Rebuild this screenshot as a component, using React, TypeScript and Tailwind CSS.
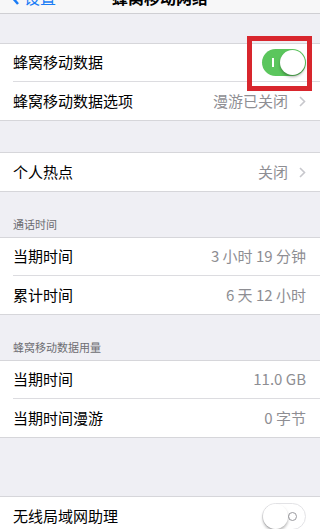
import React from 'react';

const font = { fontFamily: '"Noto Sans CJK SC", "Noto Sans", sans-serif' };

function Chevron() {
  return (
    <svg width="7" height="11" viewBox="0 0 7 11" className="ml-[11px]" aria-hidden>
      <path d="M1 1l4.5 4.5L1 10" fill="none" stroke="#c7c7cc" strokeWidth="1.6" />
    </svg>
  );
}

function Toggle({ on }: { on: boolean }) {
  if (on) {
    return (
      <div className="relative h-[27px] w-[44px] rounded-full bg-[#5bc65d]">
        <div className="absolute left-[10px] top-[9px] h-[9px] w-[1.5px] bg-white" />
        <div className="absolute right-[1px] top-[1px] h-[25px] w-[25px] rounded-full bg-white shadow-[0_2px_3px_rgba(0,0,0,0.3)]" />
      </div>
    );
  }
  return (
    <div className="relative h-[27px] w-[44px] rounded-full border border-[#e3e3e6] bg-white">
      <div className="absolute right-[8px] top-[8px] h-[9px] w-[9px] rounded-full border border-[#9a9a9f]" />
      <div className="absolute left-0 top-0 h-[25px] w-[25px] rounded-full bg-white shadow-[0_2px_3px_rgba(0,0,0,0.3)]" />
    </div>
  );
}

function Row({
  label,
  value,
  chevron,
  last,
  right,
}: {
  label: string;
  value?: string;
  chevron?: boolean;
  last?: boolean;
  right?: React.ReactNode;
}) {
  return (
    <div className="pl-[13px]">
      <div
        className={`flex h-[38px] items-center justify-between pr-[14px] ${
          last ? '' : 'border-b border-[#dcdce0]'
        }`}
      >
        <span className="text-[15px] text-black">{label}</span>
        {right ?? (
          <span className="flex items-center text-[15px] text-[#8e8e93]">
            {value}
            {chevron && <Chevron />}
          </span>
        )}
      </div>
    </div>
  );
}

function Group({ children }: { children: React.ReactNode }) {
  return <div className="border-y border-[#d6d6da] bg-white">{children}</div>;
}

function Header({ text }: { text: string }) {
  return <div className="px-[13px] pb-[4px] pt-[24px] text-[11px] leading-[17px] text-[#6d6d72]">{text}</div>;
}

export default function App() {
  return (
    <div className="relative h-[529px] w-[320px] overflow-hidden bg-[#efeff4]" style={font}>
      <div className="h-[14px] overflow-hidden border-b border-[#cfcfd3] bg-[#f7f7f8]">
        <div className="-mt-[15px] flex h-[24px] items-center px-[10px]">
          <span className="flex w-[80px] items-center text-[16px] text-[#1a7cf5]">
            <svg width="10" height="16" viewBox="0 0 10 16" className="mr-[4px]">
              <path d="M8 1L2 8l6 7" fill="none" stroke="#1a7cf5" strokeWidth="2.5" />
            </svg>
            设置
          </span>
          <span className="flex-1 text-center text-[16px] font-semibold text-black">蜂窝移动网络</span>
          <span className="w-[80px]" />
        </div>
      </div>

      <div className="h-[29px]" />
      <Group>
        <Row label="蜂窝移动数据" right={<Toggle on />} />
        <Row label="蜂窝移动数据选项" value="漫游已关闭" chevron last />
      </Group>

      <div className="h-[31px]" />
      <Group>
        <Row label="个人热点" value="关闭" chevron last />
      </Group>

      <Header text="通话时间" />
      <Group>
        <Row label="当期时间" value="3 小时 19 分钟" />
        <Row label="累计时间" value="6 天 12 小时" last />
      </Group>

      <Header text="蜂窝移动数据用量" />
      <Group>
        <Row label="当期时间" value="11.0 GB" />
        <Row label="当期时间漫游" value="0 字节" last />
      </Group>

      <div className="h-[58px]" />
      <Group>
        <Row label="无线局域网助理" right={<Toggle on={false} />} last />
      </Group>

      <div className="pointer-events-none absolute left-[247px] top-[36px] h-[55px] w-[65px] border-[5px] border-[#d8262d]" />
    </div>
  );
}
